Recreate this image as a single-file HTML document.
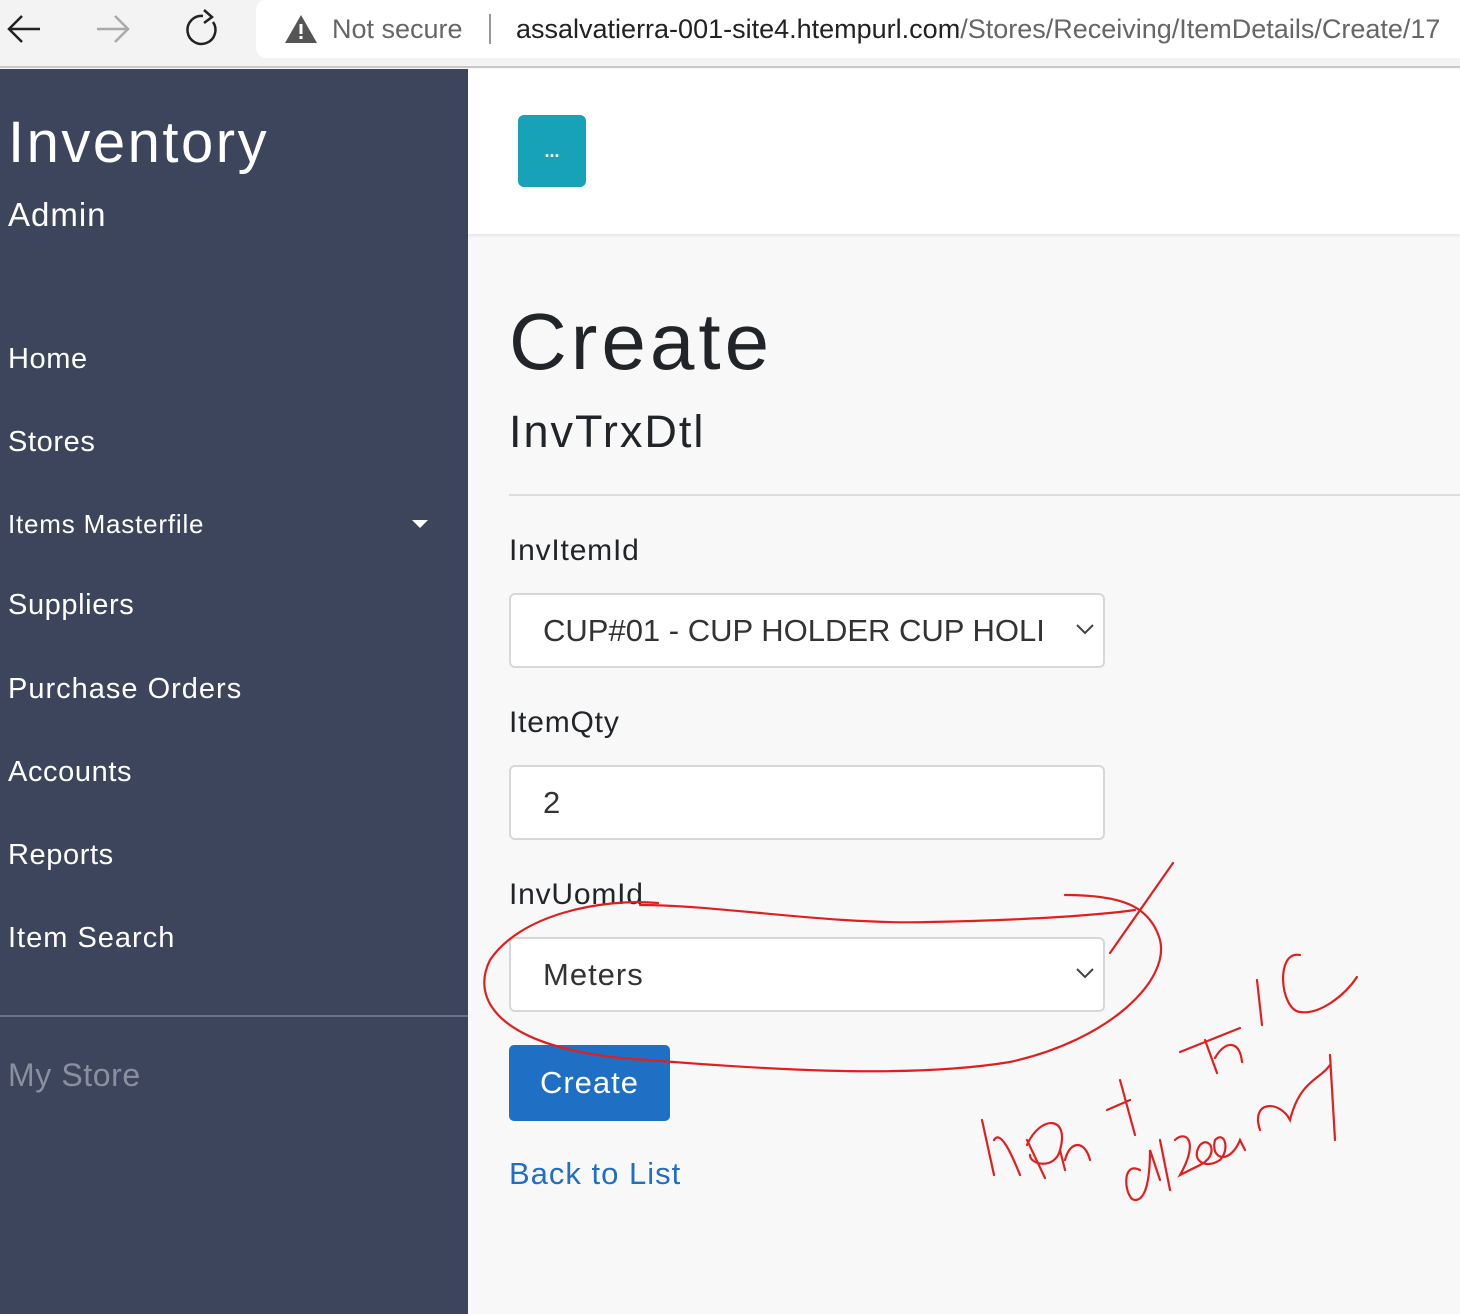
<!DOCTYPE html>
<html><head><meta charset="utf-8"><style>
*{margin:0;padding:0;box-sizing:border-box}
body{width:1460px;height:1314px;overflow:hidden;font-family:"Liberation Sans",sans-serif;background:#f8f8f8;position:relative}
.bar{position:absolute;left:0;top:0;width:1460px;height:68px;background:#f3f3f3;border-bottom:2px solid #c8c8c8}
.url{position:absolute;left:256px;top:0;width:1220px;height:58px;background:#fff;border-radius:10px;font-size:27px;color:#222;line-height:58px;white-space:nowrap}
.side{position:absolute;left:0;top:69px;width:468px;height:1245px;background:#3d455d;color:#fff}
.side .t{position:absolute;left:8px;font-size:29px;letter-spacing:.6px}
.top{position:absolute;left:468px;top:69px;width:992px;height:165px;background:#fff;box-shadow:0 2px 3px rgba(0,0,0,.08)}
.btn{position:absolute;left:50px;top:46px;width:68px;height:72px;background:#17a2b8;border-radius:6px;color:#fff;text-align:center;line-height:72px;font-size:18px;font-weight:bold}
.lbl{position:absolute;left:509px;font-size:30px;color:#212529;letter-spacing:.8px}
.inp{position:absolute;left:509px;width:596px;height:75px;background:#fff;border:2px solid #d5d8db;border-radius:6px;font-size:31px;color:#333;padding-left:32px;line-height:71px}
.chev{position:absolute;right:8px;top:28px}
</style></head><body>
<div class="bar">
<svg width="250" height="60" style="position:absolute;left:0;top:0" fill="none" stroke-width="2.5">
<path d="M40 29H10M22 16L9 29L22 42" stroke="#222"/>
<path d="M97 29H127M115 16L128 29L115 42" stroke="#aaa"/>
<path d="M213 22A14 14 0 1 1 203 16M204 10L212 17L204 23" stroke="#222"/>
</svg>
<div class="url"><svg width="34" height="30" style="position:absolute;left:28px;top:14px"><path d="M17 1L33 29H1Z" fill="#555"/><rect x="15.5" y="10" width="3" height="10" fill="#fff"/><rect x="15.5" y="22" width="3" height="3" fill="#fff"/></svg>
<span style="position:absolute;left:76px;color:#666">Not secure</span>
<span style="position:absolute;left:233px;top:14px;width:2px;height:30px;background:#999"></span>
<span style="position:absolute;left:260px">assalvatierra-001-site4.htempurl.com<span style="color:#666">/Stores/Receiving/ItemDetails/Create/17</span></span></div>
</div>
<div class="side">
<div class="t" style="top:40px;font-size:58px;letter-spacing:2.5px">Inventory</div>
<div class="t" style="top:127px;font-size:33px;letter-spacing:1px">Admin</div>
<div class="t" style="top:274px">Home</div>
<div class="t" style="top:357px">Stores</div>
<div class="t" style="top:440px;font-size:26px;letter-spacing:.8px">Items Masterfile</div>
<div style="position:absolute;left:412px;top:451px;border-left:8px solid transparent;border-right:8px solid transparent;border-top:8px solid #fff"></div>
<div class="t" style="top:520px">Suppliers</div>
<div class="t" style="top:604px;letter-spacing:1px">Purchase Orders</div>
<div class="t" style="top:687px">Accounts</div>
<div class="t" style="top:770px">Reports</div>
<div class="t" style="top:853px;letter-spacing:1px">Item Search</div>
<div style="position:absolute;left:0;top:946px;width:468px;height:2px;background:#6a7085"></div>
<div class="t" style="top:988px;color:#8a8fa0;font-size:32px">My Store</div>
</div>
<div class="top"><div class="btn">...</div></div>
<div style="position:absolute;left:509px;top:296px;font-size:80px;color:#212529;letter-spacing:4px">Create</div>
<div style="position:absolute;left:509px;top:406px;font-size:45px;color:#212529;letter-spacing:2px">InvTrxDtl</div>
<div style="position:absolute;left:509px;top:494px;width:951px;height:2px;background:#ddd"></div>
<div class="lbl" style="top:534px">InvItemId</div>
<div class="inp" style="top:593px">CUP#01 - CUP HOLDER CUP HOLI<svg class="chev" width="20" height="12"><path d="M2 2L10 10L18 2" stroke="#444" stroke-width="2" fill="none"/></svg></div>
<div class="lbl" style="top:706px">ItemQty</div>
<div class="inp" style="top:765px">2</div>
<div class="lbl" style="top:878px">InvUomId</div>
<div class="inp" style="top:937px;letter-spacing:1px">Meters<svg class="chev" width="20" height="12"><path d="M2 2L10 10L18 2" stroke="#444" stroke-width="2" fill="none"/></svg></div>
<div style="position:absolute;left:509px;top:1045px;width:161px;height:76px;background:#1f6fc5;border-radius:5px;color:#fff;font-size:31px;text-align:center;line-height:76px;letter-spacing:1px">Create</div>
<div style="position:absolute;left:509px;top:1156px;font-size:31px;color:#1f6fc5;letter-spacing:1px">Back to List</div>
<svg width="1460" height="1314" style="position:absolute;left:0;top:0" fill="none" stroke="#e02020" stroke-width="2.2" stroke-linecap="round">
<path d="M658 903C600 898 520 915 490 960C470 1000 500 1045 620 1058C750 1068 900 1080 1010 1062C1110 1040 1170 980 1160 940C1150 905 1120 895 1065 895"/>
<path d="M640 905C720 905 830 925 930 922C1030 920 1100 915 1135 910"/>
<path d="M1173 863L1110 953"/>
<path d="M982 1120L994 1175M994 1140C1000 1130 1010 1150 1020 1175M1027 1140L1045 1178M1027 1145C1040 1115 1070 1115 1060 1150C1055 1170 1030 1165 1030 1155M1060 1150L1065 1170M1065 1160C1070 1140 1085 1140 1090 1160M1120 1080L1135 1135M1107 1110L1130 1100"/>
<path d="M1180 1052L1240 1028M1205 1040L1217 1073M1215 1058C1225 1040 1240 1040 1242 1062M1257 980L1262 1025M1300 955C1275 950 1280 1010 1300 1012C1320 1015 1345 995 1357 977"/>
<path d="M1140 1170C1120 1160 1125 1200 1135 1200C1150 1200 1150 1160 1150 1150L1160 1180M1160 1140L1170 1190M1175 1140C1185 1130 1200 1140 1180 1175L1200 1165C1220 1155 1210 1135 1200 1145C1190 1160 1205 1170 1220 1160C1230 1150 1225 1130 1215 1140C1210 1160 1230 1165 1240 1140L1245 1150M1260 1130C1250 1100 1280 1100 1290 1120C1300 1080 1320 1080 1330 1065M1330 1055L1335 1140"/>
</svg>
</body></html>
